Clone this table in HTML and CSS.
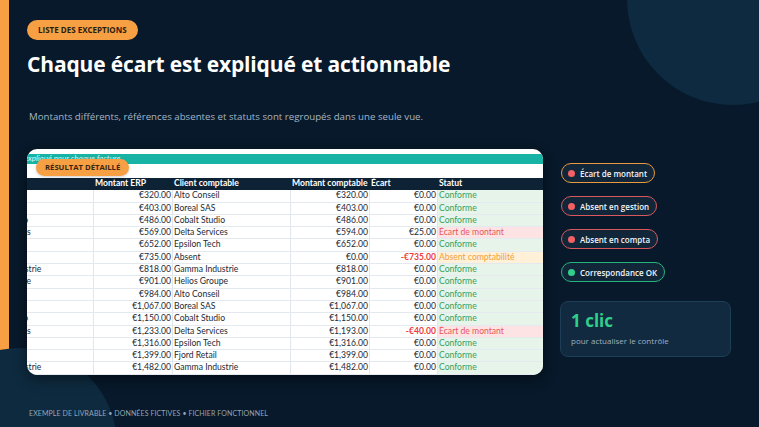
FILE: index.html
```html
<!DOCTYPE html>
<html lang="fr">
<head>
<meta charset="utf-8">
<title>Liste des exceptions</title>
<link rel="stylesheet" href="styles.css">
</head>
<body>
<div class="accent"></div>
<div class="blob blob-tr"></div>
<div class="blob blob-bl"></div>
<main class="page">
  <span class="badge">LISTE DES EXCEPTIONS</span>
  <h1 class="title">Chaque écart est expliqué et actionnable</h1>
  <p class="sub">Montants différents, références absentes et statuts sont regroupés dans une seule vue.</p>
  <section class="main">
    <div class="card">
      <div class="band"><span>Écart expliqué pour chaque facture</span></div>
      <div class="blank"></div>
      <div class="sheet">
        <div class="row head"><div>Client ERP</div><div>Montant ERP</div><div>Client comptable</div><div>Montant comptable</div><div>Écart</div><div>Statut</div></div>
        <div class="row"><div>Alto Conseil</div><div class="num">€320.00</div><div>Alto Conseil</div><div class="num">€320.00</div><div class="num">€0.00</div><div class="st ok">Conforme</div></div>
        <div class="row"><div>Boreal SAS</div><div class="num">€403.00</div><div>Boreal SAS</div><div class="num">€403.00</div><div class="num">€0.00</div><div class="st ok">Conforme</div></div>
        <div class="row"><div>Cobalt Studio</div><div class="num">€486.00</div><div>Cobalt Studio</div><div class="num">€486.00</div><div class="num">€0.00</div><div class="st ok">Conforme</div></div>
        <div class="row"><div>Delta Services</div><div class="num">€569.00</div><div>Delta Services</div><div class="num">€594.00</div><div class="num">€25.00</div><div class="st bad">Écart de montant</div></div>
        <div class="row"><div>Epsilon Tech</div><div class="num">€652.00</div><div>Epsilon Tech</div><div class="num">€652.00</div><div class="num">€0.00</div><div class="st ok">Conforme</div></div>
        <div class="row"><div>Fjord Retail</div><div class="num">€735.00</div><div>Absent</div><div class="num">€0.00</div><div class="num neg">-€735.00</div><div class="st warn">Absent comptabilité</div></div>
        <div class="row"><div>Gamma Industrie</div><div class="num">€818.00</div><div>Gamma Industrie</div><div class="num">€818.00</div><div class="num">€0.00</div><div class="st ok">Conforme</div></div>
        <div class="row"><div>Helios Groupe</div><div class="num">€901.00</div><div>Helios Groupe</div><div class="num">€901.00</div><div class="num">€0.00</div><div class="st ok">Conforme</div></div>
        <div class="row"><div>Alto Conseil</div><div class="num">€984.00</div><div>Alto Conseil</div><div class="num">€984.00</div><div class="num">€0.00</div><div class="st ok">Conforme</div></div>
        <div class="row"><div>Boreal SAS</div><div class="num">€1,067.00</div><div>Boreal SAS</div><div class="num">€1,067.00</div><div class="num">€0.00</div><div class="st ok">Conforme</div></div>
        <div class="row"><div>Cobalt Studio</div><div class="num">€1,150.00</div><div>Cobalt Studio</div><div class="num">€1,150.00</div><div class="num">€0.00</div><div class="st ok">Conforme</div></div>
        <div class="row"><div>Delta Services</div><div class="num">€1,233.00</div><div>Delta Services</div><div class="num">€1,193.00</div><div class="num neg">-€40.00</div><div class="st bad">Écart de montant</div></div>
        <div class="row"><div>Epsilon Tech</div><div class="num">€1,316.00</div><div>Epsilon Tech</div><div class="num">€1,316.00</div><div class="num">€0.00</div><div class="st ok">Conforme</div></div>
        <div class="row"><div>Fjord Retail</div><div class="num">€1,399.00</div><div>Fjord Retail</div><div class="num">€1,399.00</div><div class="num">€0.00</div><div class="st ok">Conforme</div></div>
        <div class="row"><div>Gamma Industrie</div><div class="num">€1,482.00</div><div>Gamma Industrie</div><div class="num">€1,482.00</div><div class="num">€0.00</div><div class="st ok">Conforme</div></div>
      </div>
      <span class="tag">RÉSULTAT DÉTAILLÉ</span>
    </div>
    <aside class="side">
      <div class="legend">
        <span class="pill pill-amber"><i class="dot dot-red"></i>Écart de montant</span>
        <span class="pill pill-red"><i class="dot dot-red"></i>Absent en gestion</span>
        <span class="pill pill-red"><i class="dot dot-red"></i>Absent en compta</span>
        <span class="pill pill-green"><i class="dot dot-green"></i>Correspondance OK</span>
      </div>
      <div class="stat">
        <div class="stat-val">1 clic</div>
        <div class="stat-lbl">pour actualiser le contrôle</div>
      </div>
    </aside>
  </section>
  <footer class="foot">EXEMPLE DE LIVRABLE • DONNÉES FICTIVES • FICHIER FONCTIONNEL</footer>
</main>
</body>
</html>
```
FILE: styles.css
```css
* { box-sizing: border-box; }
html, body { margin: 0; padding: 0; }
body {
  width: 759px;
  height: 427px;
  overflow: hidden;
  position: relative;
  background: #07192a;
  font-family: "Open Sans", "Noto Sans", sans-serif;
  color: #ffffff;
}
.accent {
  position: absolute;
  left: 0; top: 0;
  width: 9px; height: 100%;
  background: #f7a043;
  z-index: 0;
}
.blob {
  position: absolute;
  border-radius: 50%;
  background: #0d2a40;
  z-index: 1;
}
.blob-tr { left: 627px; top: -107px; width: 212px; height: 212px; }
.blob-bl { left: -77px; top: 348px; width: 194px; height: 194px; background: #0e2a3f; }

.page {
  position: relative;
  z-index: 2;
  display: flex;
  flex-direction: column;
  align-items: flex-start;
  padding: 20px 0 0 27px;
}
.badge {
  display: inline-block;
  height: 20px;
  line-height: 20px;
  padding: 0 11px;
  border-radius: 10px;
  background: #f7a043;
  color: #2a1c0e;
  font-size: 8px;
  font-weight: 700;
}
.title {
  margin: 11px 0 0 0;
  font-size: 21px;
  line-height: 26px;
  font-weight: 700;
  letter-spacing: -0.15px;
}
.sub {
  margin: 33px 0 0 2px;
  font-size: 9.7px;
  line-height: 14px;
  color: #a6b6c6;
}
.main {
  margin-top: 25px;
  display: flex;
  gap: 17px;
  align-items: flex-start;
}
.card {
  position: relative;
  width: 516px;
  height: 226px;
  background: #ffffff;
  border-radius: 10px;
  overflow: hidden;
  box-shadow: 0 4px 14px rgba(0,0,0,0.45);
  font-family: Lato, "Liberation Sans", sans-serif;
}
.band {
  margin-top: 5px;
  height: 10px;
  background: #17b3a5;
  overflow: hidden;
  white-space: nowrap;
}
.band span {
  display: block;
  margin-left: -22px;
  font-size: 8px;
  line-height: 8px;
  font-style: italic;
  color: #dff6f3;
}
.blank { height: 14px; background: #ffffff; }
.sheet {
  margin-left: -51px;
  display: flex;
  flex-direction: column;
}
.row {
  display: grid;
  grid-template-columns: 118px 79px 118px 79px 68px 140px;
  height: 12.3px;
  font-size: 8.6px;
  line-height: 11.3px;
  color: #1d2935;
  border-bottom: 1px solid #e4e9ef;
}
.row > div {
  padding: 0 1px;
  white-space: nowrap;
  overflow: hidden;
  border-right: 1px solid #e1e6ec;
}
.row.head {
  background: #0e2236;
  color: #ffffff;
  font-weight: 700;
  border-bottom: 0;
}
.row.head > div { border-right-color: #0e2236; }
.num { text-align: right; }
.neg { color: #ee3b3b; font-weight: 700; }
.st { padding-left: 2px; }
.ok { background: #e7f4ea; color: #35a05e; }
.bad { background: #fde3e3; color: #e5575a; }
.warn { background: #fff0d8; color: #f2a13a; }
.tag {
  position: absolute;
  left: 9px;
  top: 10px;
  height: 17px;
  line-height: 17px;
  padding: 0 9px;
  border-radius: 9px;
  background: #f7a043;
  color: #3a2512;
  font-family: "Open Sans", sans-serif;
  font-size: 7.7px;
  font-weight: 700;
  box-shadow: 0 1px 3px rgba(0,0,0,0.2);
}
.side {
  display: flex;
  flex-direction: column;
  padding-top: 14px;
}
.legend {
  display: flex;
  flex-direction: column;
  align-items: flex-start;
  gap: 13px;
  padding-left: 1px;
}
.pill {
  display: inline-flex;
  align-items: center;
  gap: 5px;
  height: 20px;
  padding: 0 7px 0 6px;
  border-radius: 10px;
  border: 1.3px solid;
  background: #12263a;
  color: #f2f5f8;
  font-size: 8px;
  font-weight: 600;
}
.pill-amber { border-color: #e89a3c; }
.pill-red { border-color: #d9585b; }
.pill-green { border-color: #27b47c; }
.dot { display: block; width: 7px; height: 7px; border-radius: 50%; }
.dot-red { background: #f26165; }
.dot-green { background: #2fcf8c; }
.stat {
  margin-top: 19px;
  width: 171px;
  height: 56px;
  padding: 8px 10px 0 10px;
  background: #112a40;
  border: 1px solid #1e3d56;
  border-radius: 8px;
}
.stat-val {
  font-size: 17px;
  line-height: 22px;
  font-weight: 700;
  color: #2fcf8c;
}
.stat-lbl {
  margin-top: 3px;
  font-size: 8px;
  line-height: 11px;
  color: #9fb0c0;
}
.foot {
  margin: 33px 0 0 2px;
  font-family: Lato, "Liberation Sans", sans-serif;
  font-size: 7px;
  line-height: 10px;
  color: #93a6b8;
  letter-spacing: 0.1px;
}
```
